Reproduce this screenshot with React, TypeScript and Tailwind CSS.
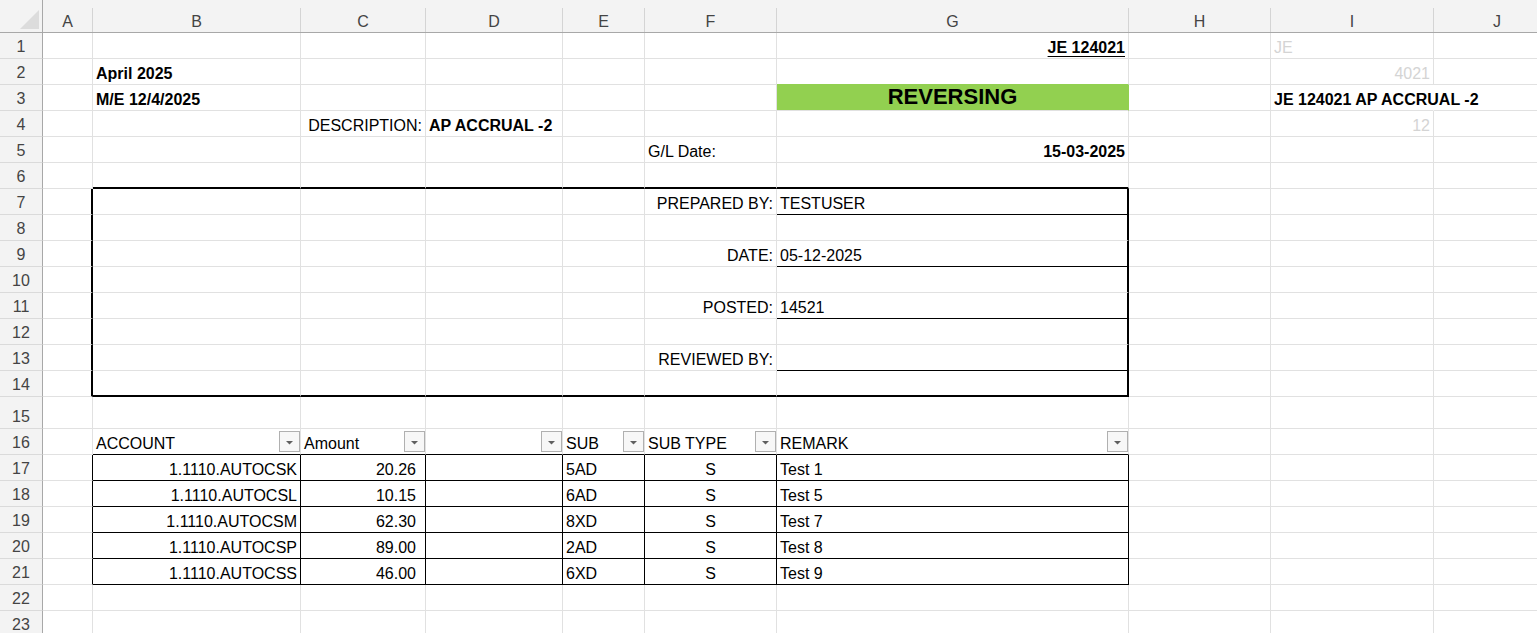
import React from 'react';

type Align = 'left' | 'right' | 'center';

type Cell = {
    text: string;
    align?: Align;
    bold?: boolean;
    faint?: boolean;
    underline?: boolean;
    filter?: boolean;
    title?: boolean;
    num?: boolean;
};

const COLS = ['A', 'B', 'C', 'D', 'E', 'F', 'G', 'H', 'I', 'J'];
const ROWS = Array.from({ length: 23 }, (_, i) => i + 1);
const BOX_COLS = ['B', 'C', 'D', 'E', 'F', 'G'];

const cells: Record<string, Cell> = {
    G1: { text: 'JE 124021', align: 'right', bold: true, underline: true },
    I1: { text: 'JE', faint: true },
    B2: { text: 'April 2025', bold: true },
    I2: { text: '4021', align: 'right', faint: true },
    B3: { text: 'M/E 12/4/2025', bold: true },
    G3: { text: 'REVERSING', align: 'center', bold: true, title: true },
    I3: { text: 'JE 124021 AP ACCRUAL -2', bold: true },
    C4: { text: 'DESCRIPTION:', align: 'right' },
    D4: { text: 'AP ACCRUAL -2', bold: true },
    I4: { text: '12', align: 'right', faint: true },
    F5: { text: 'G/L Date:' },
    G5: { text: '15-03-2025', align: 'right', bold: true },
    F7: { text: 'PREPARED BY:', align: 'right' },
    G7: { text: 'TESTUSER' },
    F9: { text: 'DATE:', align: 'right' },
    G9: { text: '05-12-2025' },
    F11: { text: 'POSTED:', align: 'right' },
    G11: { text: '14521' },
    F13: { text: 'REVIEWED BY:', align: 'right' },
    B16: { text: 'ACCOUNT', filter: true },
    C16: { text: 'Amount', filter: true },
    D16: { text: '', filter: true },
    E16: { text: 'SUB', filter: true },
    F16: { text: 'SUB TYPE', filter: true },
    G16: { text: 'REMARK', filter: true },
};

// journal lines, rows 17-21
const lines = [
    ['1.1110.AUTOCSK', '20.26', '5AD', 'S', 'Test 1'],
    ['1.1110.AUTOCSL', '10.15', '6AD', 'S', 'Test 5'],
    ['1.1110.AUTOCSM', '62.30', '8XD', 'S', 'Test 7'],
    ['1.1110.AUTOCSP', '89.00', '2AD', 'S', 'Test 8'],
    ['1.1110.AUTOCSS', '46.00', '6XD', 'S', 'Test 9'],
];

lines.forEach((l, i) => {
    const r = 17 + i;
    cells['B' + r] = { text: l[0], align: 'right' };
    cells['C' + r] = { text: l[1], num: true };
    cells['E' + r] = { text: l[2] };
    cells['F' + r] = { text: l[3], align: 'center' };
    cells['G' + r] = { text: l[4] };
});

function borders(r: number, c: string) {
    const inBox = BOX_COLS.includes(c);
    let right = 'border-r border-r-[#e1e1e1]';
    let bottom = 'border-b border-b-[#e1e1e1]';

    // signature box B7:G14
    if (inBox && (r === 6 || r === 14)) bottom = 'border-b-2 border-b-black';
    if ((c === 'A' || c === 'G') && r >= 7 && r <= 14) right = 'border-r-2 border-r-black';
    if (c === 'G' && [7, 9, 11, 13].includes(r)) bottom = 'border-b border-b-black';

    // lines table B17:G21
    if (inBox && r >= 16 && r <= 21) bottom = 'border-b border-b-black';
    if ((inBox || c === 'A') && r >= 17 && r <= 21) right = 'border-r border-r-black';

    // green fill and overflowing text
    if (c === 'G' && r === 2) bottom = 'border-b border-b-[#92d050]';
    if (c === 'G' && r === 3) right = 'border-r border-r-[#92d050]';
    if (c === 'I' && r === 3) right = 'border-r border-r-transparent';

    return `${right} ${bottom}`;
}

function FilterButton() {
    return (
        <div className="mb-[1px] flex h-[21px] w-[21px] shrink-0 items-center justify-center border border-[#b0b0b0] bg-[#f7f7f7]">
            <svg width="7" height="4" viewBox="0 0 7 4" className="mt-[3px]">
                <polygon points="0,0 7,0 3.5,3.5" fill="#5f5f5f" />
            </svg>
        </div>
    );
}

function SheetCell({ r, c }: { r: number; c: string }) {
    const cell = cells[c + r];
    const base = `flex items-end whitespace-nowrap leading-[normal] ${borders(r, c)}`;

    if (!cell) return <div className={base} />;

    if (cell.filter) {
        return (
            <div className={`${base} justify-between pb-[1px] pl-[3px]`}>
                <span>{cell.text}</span>
                <FilterButton />
            </div>
        );
    }

    let align = 'justify-start pl-[3px]';
    if (cell.align === 'right') align = 'justify-end pr-[3px]';
    if (cell.align === 'center') align = 'justify-center';
    if (cell.num) align = 'justify-end pr-[9px]';

    return (
        <div className={`${base} ${align} ${cell.title ? 'bg-[#92d050] pb-0 text-[22px]' : 'pb-[1px]'}`}>
            <span
                className={`${cell.bold ? 'font-bold' : ''} ${cell.faint ? 'text-[#d4d4d4]' : ''} ${
                    cell.underline ? 'underline underline-offset-[3px]' : ''
                }`}>
                {cell.text}
            </span>
        </div>
    );
}

export default function App() {
    return (
        <div className="h-[633px] w-full overflow-hidden bg-white font-['Liberation_Sans',Arial,sans-serif] text-[16px] text-black">
            <div className="grid w-max grid-cols-[43px_50px_208px_125px_137px_82px_132px_352px_142px_163px_127px] grid-rows-[33px_repeat(14,26px)_32px_repeat(8,26px)]">
                {/* corner */}
                <div className="flex items-end justify-end border-r border-b border-r-[#a8a8a8] border-b-[#a8a8a8] bg-[#f3f3f3] pr-[3px] pb-[3px]">
                    <svg width="19" height="19" viewBox="0 0 19 19">
                        <polygon points="0,19 19,19 19,0" fill="#dcdcdc" />
                    </svg>
                </div>

                {/* column headers */}
                {COLS.map((c) => (
                    <div key={c} className="flex border-b border-b-[#a8a8a8] bg-[#f3f3f3] text-[#444]">
                        <div className="flex flex-1 items-end justify-center pb-[1px] leading-[normal]">{c}</div>
                        <div className="mt-[8px] w-px bg-[#d4d4d4]" />
                    </div>
                ))}

                {ROWS.map((r) => (
                    <React.Fragment key={r}>
                        <div className="flex items-end justify-center border-r border-b border-r-[#a8a8a8] border-b-[#dadada] bg-[#f3f3f3] pb-[2px] leading-[normal] text-[#444]">
                            {r}
                        </div>
                        {COLS.map((c) => (
                            <SheetCell key={c + r} r={r} c={c} />
                        ))}
                    </React.Fragment>
                ))}
            </div>
        </div>
    );
}
